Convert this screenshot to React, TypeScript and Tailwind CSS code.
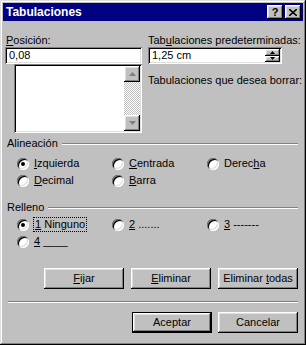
import React from "react";

const raised =
  "shadow-[inset_-1px_-1px_#000,inset_1px_1px_#fff,inset_-2px_-2px_#808080,inset_2px_2px_#dfdfdf]";
const sunken =
  "shadow-[inset_1px_1px_#808080,inset_-1px_-1px_#fff,inset_2px_2px_#000,inset_-2px_-2px_#dfdfdf]";

function Radio({ checked }: { checked?: boolean }) {
  return (
    <span className="w-[12px] h-[12px] rounded-full bg-white shrink-0 flex items-center justify-center shadow-[inset_1px_1px_#808080,inset_-1px_-1px_#fff,inset_2px_2px_#000,inset_-2px_-2px_#dfdfdf]">
      {checked && <span className="w-[4px] h-[4px] rounded-full bg-black" />}
    </span>
  );
}

function RadioItem({
  checked,
  children,
  focus,
}: {
  checked?: boolean;
  children: React.ReactNode;
  focus?: boolean;
}) {
  return (
    <div className="flex items-center h-[17px]">
      <Radio checked={checked} />
      <span
        className={
          focus
            ? "ml-[4px] px-[1px] border border-dotted border-black leading-[13px] whitespace-nowrap"
            : "ml-[5px] leading-[13px] whitespace-nowrap"
        }
      >
        {children}
      </span>
    </div>
  );
}

function GroupHeader({ label }: { label: string }) {
  return (
    <div className="flex items-center pl-[4px] pr-[5px] h-[13px]">
      <span>{label}</span>
      <div className="flex-1 ml-[4px] h-[2px] border-t border-t-[#808080] border-b border-b-white" />
    </div>
  );
}

function Btn({
  children,
  def,
}: {
  children: React.ReactNode;
  def?: boolean;
}) {
  if (def) {
    return (
      <div className="w-[80px] h-[21px] border border-black flex">
        <div
          className={`flex-1 flex items-center justify-center bg-[#c0c0c0] ${raised}`}
        >
          <span className="whitespace-pre">{children}</span>
        </div>
      </div>
    );
  }
  return (
    <div
      className={`w-[80px] h-[21px] flex items-center justify-center bg-[#c0c0c0] ${raised}`}
    >
      <span className="whitespace-pre">{children}</span>
    </div>
  );
}

function Tri({ up, color = "#000" }: { up?: boolean; color?: string }) {
  return (
    <svg width="7" height="4" viewBox="0 0 7 4">
      {up ? (
        <polygon points="3.5,0 7,4 0,4" fill={color} />
      ) : (
        <polygon points="0,0 7,0 3.5,4" fill={color} />
      )}
    </svg>
  );
}

export default function App() {
  return (
    <div
      className={`w-[306px] h-[345px] bg-[#c0c0c0] p-[3px] flex flex-col text-[11px] leading-[13px] text-black font-['Liberation_Sans',Arial,sans-serif] shadow-[inset_-1px_-1px_#000,inset_1px_1px_#dfdfdf,inset_-2px_-2px_#808080,inset_2px_2px_#fff]`}
    >
      {/* Title bar */}
      <div className="h-[18px] bg-[#000080] flex items-center justify-between pl-[3px] pr-[2px]">
        <span className="text-white font-bold text-[12px] leading-[14px]">
          Tabulaciones
        </span>
        <div className="flex gap-[2px]">
          <div
            className={`w-[16px] h-[14px] bg-[#c0c0c0] flex items-center justify-center font-bold text-[11px] ${raised}`}
          >
            ?
          </div>
          <div
            className={`w-[16px] h-[14px] bg-[#c0c0c0] flex items-center justify-center ${raised}`}
          >
            <svg width="8" height="7" viewBox="0 0 8 7">
              <path d="M0 0 L8 7 M8 0 L0 7" stroke="#000" strokeWidth="1.6" />
            </svg>
          </div>
        </div>
      </div>

      {/* Top section */}
      <div className="flex mt-[13px] ml-[2px] gap-[6px]">
        <div className="w-[137px] flex flex-col">
          <span className="pl-[1px]">
            <u>P</u>osición:
          </span>
          <div
            className={`h-[17px] bg-white flex items-center pl-[4px] ${sunken}`}
          >
            0,08
          </div>
          <div
            className={`ml-[9px] h-[69px] bg-white flex justify-end p-[2px] ${sunken}`}
          >
            <div className="w-[16px] flex flex-col">
              <div
                className={`h-[16px] bg-[#c0c0c0] flex items-center justify-center ${raised}`}
              >
                <Tri up color="#808080" />
              </div>
              <div className="flex-1 bg-[repeating-conic-gradient(#ffffff_0%_25%,#c0c0c0_0%_50%)] bg-[length:2px_2px]" />
              <div
                className={`h-[16px] bg-[#c0c0c0] flex items-center justify-center ${raised}`}
              >
                <Tri color="#808080" />
              </div>
            </div>
          </div>
        </div>
        <div className="w-[134px] flex flex-col">
          <span className="whitespace-nowrap">
            Tab<u>u</u>laciones predeterminadas:
          </span>
          <div
            className={`h-[17px] bg-white flex items-stretch pl-[4px] py-[2px] pr-[2px] ${sunken}`}
          >
            <span className="flex-1 flex items-center">1,25 cm</span>
            <div className="w-[15px] flex flex-col">
              <div
                className={`flex-1 bg-[#c0c0c0] flex items-center justify-center ${raised}`}
              >
                <svg width="5" height="3" viewBox="0 0 5 3">
                  <polygon points="2.5,0 5,3 0,3" fill="#000" />
                </svg>
              </div>
              <div
                className={`flex-1 bg-[#c0c0c0] flex items-center justify-center ${raised}`}
              >
                <svg width="5" height="3" viewBox="0 0 5 3">
                  <polygon points="0,0 5,0 2.5,3" fill="#000" />
                </svg>
              </div>
            </div>
          </div>
          <span className="mt-[10px] whitespace-nowrap">
            Tabulaciones que desea borrar:
          </span>
        </div>
      </div>

      {/* Alineación */}
      <div className="mt-[4px]">
        <GroupHeader label="Alineación" />
      </div>
      <div className="mt-[5px] pl-[14px] grid grid-cols-[95px_95px_1fr]">
        <RadioItem checked>
          <u>I</u>zquierda
        </RadioItem>
        <RadioItem>
          <u>C</u>entrada
        </RadioItem>
        <RadioItem>
          Derec<u>h</u>a
        </RadioItem>
        <RadioItem>
          <u>D</u>ecimal
        </RadioItem>
        <RadioItem>
          <u>B</u>arra
        </RadioItem>
      </div>

      {/* Relleno */}
      <div className="mt-[12px]">
        <GroupHeader label="Relleno" />
      </div>
      <div className="mt-[2px] pl-[14px] grid grid-cols-[95px_95px_1fr]">
        <RadioItem checked focus>
          <u>1</u> Ninguno
        </RadioItem>
        <RadioItem>
          <u>2</u> .......
        </RadioItem>
        <RadioItem>
          <u>3</u> -------
        </RadioItem>
        <RadioItem>
          <u>4</u> ____
        </RadioItem>
      </div>

      {/* Buttons */}
      <div className="mt-[18px] flex justify-end gap-[7px] pr-[5px]">
        <Btn>
          <u>F</u>ijar
        </Btn>
        <Btn>
          <u>E</u>liminar
        </Btn>
        <Btn>
          Eliminar <u>t</u>odas
        </Btn>
      </div>

      <div className="mt-[12px] mx-[5px] h-[2px] border-t border-t-[#808080] border-b border-b-white" />

      <div className="mt-[9px] flex justify-end gap-[6px] pr-[5px]">
        <Btn def>Aceptar</Btn>
        <Btn>Cancelar</Btn>
      </div>
    </div>
  );
}
